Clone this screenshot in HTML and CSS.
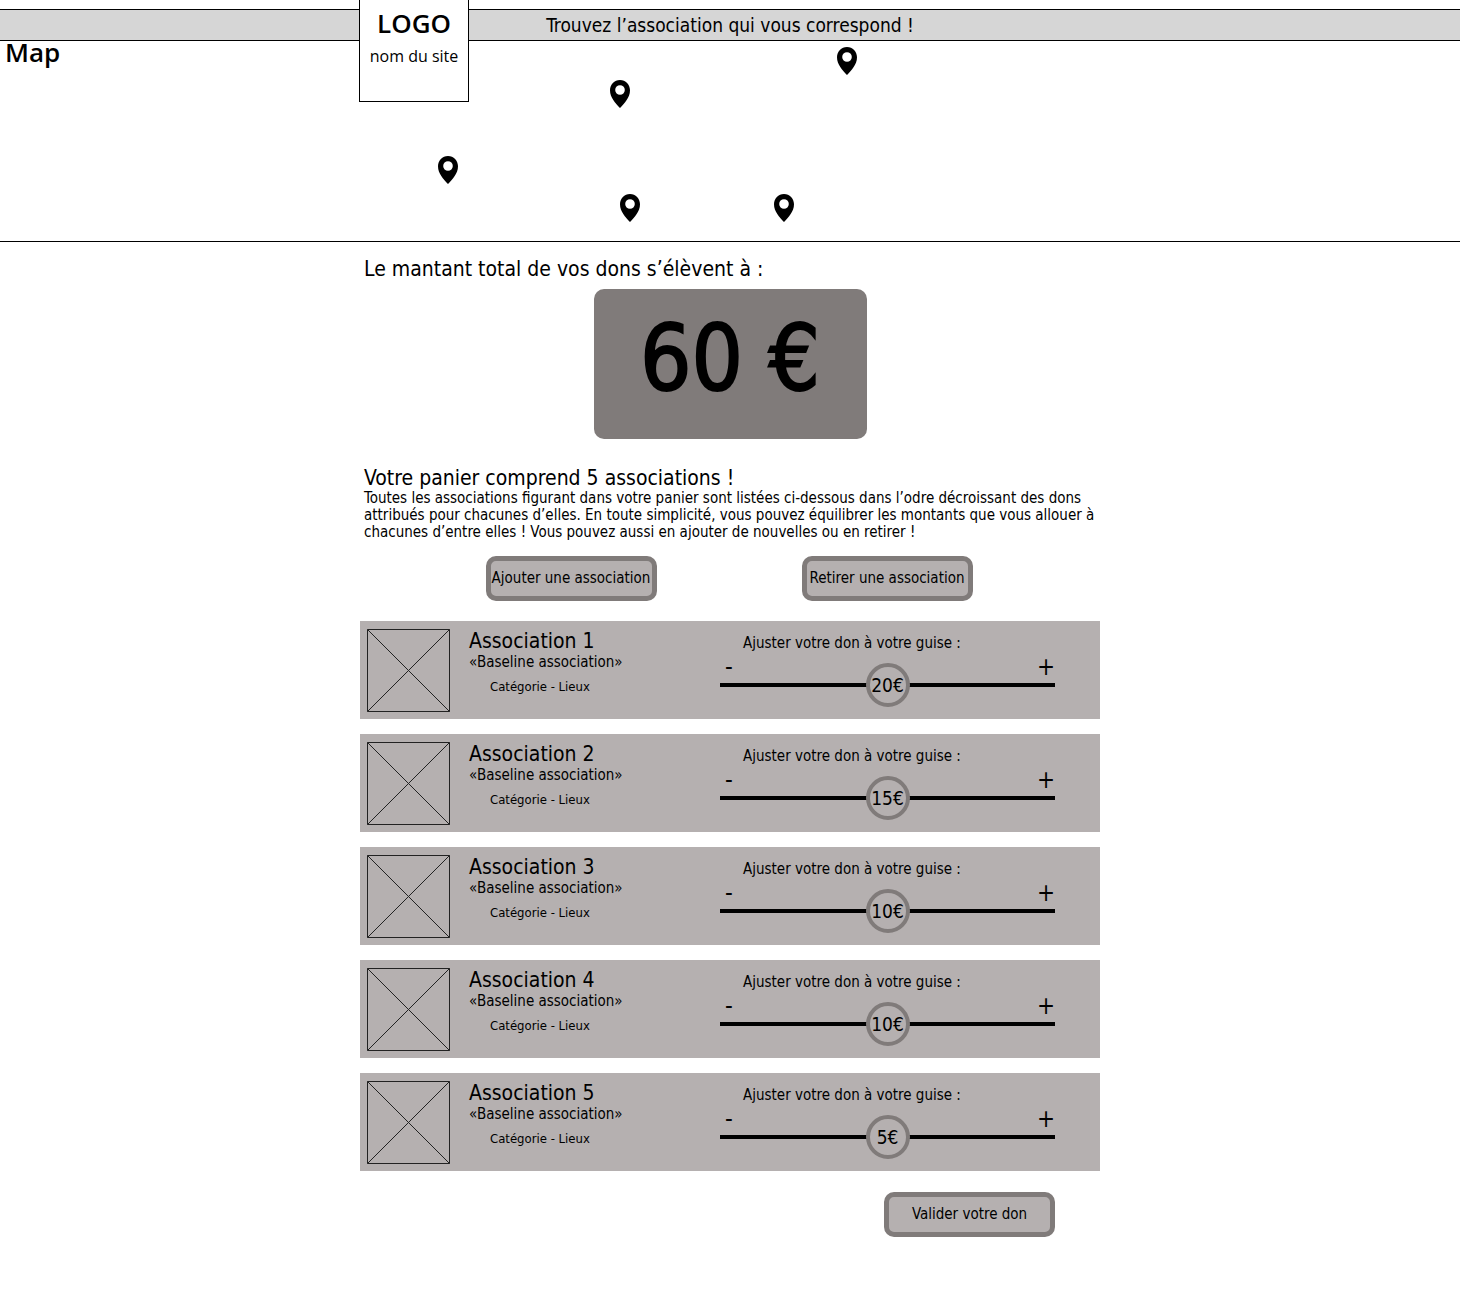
FILE: index.html
```html
<!DOCTYPE html>
<html lang="fr">
<head>
<meta charset="utf-8">
<meta name="viewport" content="width=device-width, initial-scale=1">
<title>Votre panier de dons</title>
<link rel="stylesheet" href="styles.css">
</head>
<body>
<svg class="sprite" aria-hidden="true">
  <symbol id="pin" viewBox="0 0 20 28">
    <path fill-rule="evenodd" d="M10 0C4.300 0 0 4.500 0 10.300C0 17.500 5.500 23.500 10 28C14.500 23.500 20 17.500 20 10.300C20 4.500 15.700 0 10 0ZM10 5.200a4.800 4.800 0 1 1 0 9.600a4.800 4.800 0 1 1 0-9.600Z"/>
  </symbol>
  <symbol id="placeholder" viewBox="0 0 83 83">
    <path d="M.5 .5H82.500V82.500H.5ZM.5 .5L82.500 82.500M82.500 .5L.5 82.500" fill="none" stroke="#222"/>
  </symbol>
</svg>

<header class="banner">
  <div class="banner-inner">
    <a class="logo" href="#"><span class="logo-mark">LOGO</span><span class="logo-name">nom du site</span></a>
    <p class="slogan">Trouvez l’association qui vous correspond !</p>
  </div>
</header>

<section class="map" aria-labelledby="map-title">
  <h2 class="map-title" id="map-title">Map</h2>
  <svg class="pin pin-a"><use href="#pin"/></svg>
  <svg class="pin pin-b"><use href="#pin"/></svg>
  <svg class="pin pin-c"><use href="#pin"/></svg>
  <svg class="pin pin-d"><use href="#pin"/></svg>
  <svg class="pin pin-e"><use href="#pin"/></svg>
</section>

<main class="basket">
  <h1 class="heading">Le mantant total de vos dons s’élèvent à :</h1>
  <p class="total">60 €</p>

  <h2 class="heading">Votre panier comprend 5 associations !</h2>
  <p class="intro">Toutes les associations figurant dans votre panier sont listées ci-dessous dans l’odre décroissant des dons attribués pour chacunes d’elles. En toute simplicité, vous pouvez équilibrer les montants que vous allouer à chacunes d’entre elles ! Vous pouvez aussi en ajouter de nouvelles ou en retirer !</p>

  <div class="actions">
    <button class="button" type="button">Ajouter une association</button>
    <button class="button" type="button">Retirer une association</button>
  </div>

  <ul class="cards">
    <li class="card">
      <svg class="thumb"><use href="#placeholder"/></svg>
      <div class="info"><h3 class="name">Association 1</h3><p class="baseline">«Baseline association»</p><p class="category">Catégorie - Lieux</p></div>
      <div class="adjust">
        <label class="adjust-label" for="don1">Ajuster votre don à votre guise :</label>
        <div class="steps"><button class="step" type="button">-</button><button class="step" type="button">+</button></div>
        <div class="slider"><input class="range" id="don1" type="range" min="0" max="40" value="20"><output class="amount" for="don1">20€</output></div>
      </div>
    </li>
    <li class="card">
      <svg class="thumb"><use href="#placeholder"/></svg>
      <div class="info"><h3 class="name">Association 2</h3><p class="baseline">«Baseline association»</p><p class="category">Catégorie - Lieux</p></div>
      <div class="adjust">
        <label class="adjust-label" for="don2">Ajuster votre don à votre guise :</label>
        <div class="steps"><button class="step" type="button">-</button><button class="step" type="button">+</button></div>
        <div class="slider"><input class="range" id="don2" type="range" min="0" max="30" value="15"><output class="amount" for="don2">15€</output></div>
      </div>
    </li>
    <li class="card">
      <svg class="thumb"><use href="#placeholder"/></svg>
      <div class="info"><h3 class="name">Association 3</h3><p class="baseline">«Baseline association»</p><p class="category">Catégorie - Lieux</p></div>
      <div class="adjust">
        <label class="adjust-label" for="don3">Ajuster votre don à votre guise :</label>
        <div class="steps"><button class="step" type="button">-</button><button class="step" type="button">+</button></div>
        <div class="slider"><input class="range" id="don3" type="range" min="0" max="20" value="10"><output class="amount" for="don3">10€</output></div>
      </div>
    </li>
    <li class="card">
      <svg class="thumb"><use href="#placeholder"/></svg>
      <div class="info"><h3 class="name">Association 4</h3><p class="baseline">«Baseline association»</p><p class="category">Catégorie - Lieux</p></div>
      <div class="adjust">
        <label class="adjust-label" for="don4">Ajuster votre don à votre guise :</label>
        <div class="steps"><button class="step" type="button">-</button><button class="step" type="button">+</button></div>
        <div class="slider"><input class="range" id="don4" type="range" min="0" max="20" value="10"><output class="amount" for="don4">10€</output></div>
      </div>
    </li>
    <li class="card">
      <svg class="thumb"><use href="#placeholder"/></svg>
      <div class="info"><h3 class="name">Association 5</h3><p class="baseline">«Baseline association»</p><p class="category">Catégorie - Lieux</p></div>
      <div class="adjust">
        <label class="adjust-label" for="don5">Ajuster votre don à votre guise :</label>
        <div class="steps"><button class="step" type="button">-</button><button class="step" type="button">+</button></div>
        <div class="slider"><input class="range" id="don5" type="range" min="0" max="10" value="5"><output class="amount" for="don5">5€</output></div>
      </div>
    </li>
  </ul>

  <div class="submit"><button class="button" type="submit">Valider votre don</button></div>
</main>
</body>
</html>
```
FILE: styles.css
```css
* { box-sizing: border-box; }

body {
  margin: 0;
  padding-top: 9px;
  background: #fff;
  color: #000;
  font-family: "DejaVu Sans Condensed", "DejaVu Sans", sans-serif;
  font-stretch: condensed;
  font-size: 15px;
  line-height: 17px;
}

h1, h2, h3, p, ul { margin: 0; padding: 0; font-weight: 400; }

button, input { font: inherit; color: inherit; }

.sprite { position: absolute; width: 0; height: 0; }

/* Banner */
.banner {
  background: #d6d6d6;
  border-top: 1px solid #000;
  border-bottom: 1px solid #000;
}

.banner-inner {
  position: relative;
  max-width: 742px;
  margin: 0 auto;
}

.slogan {
  font-size: 19px;
  line-height: 30px;
  text-align: center;
}

.logo {
  position: absolute;
  z-index: 1;
  left: 0;
  top: -10px;
  display: flex;
  flex-direction: column;
  align-items: center;
  width: 110px;
  height: 102px;
  padding-top: 8px;
  background: #fff;
  border: 1px solid #000;
  border-top: 0;
  color: inherit;
  text-decoration: none;
  font-family: "Open Sans", sans-serif;
  font-stretch: normal;
}

.logo-mark { font-size: 26px; line-height: 30px; font-weight: 600; }
.logo-name { font-size: 16px; line-height: 36px; font-weight: 500; }

/* Map */
.map {
  position: relative;
  height: 201px;
  padding-left: 5px;
  border-bottom: 1px solid #000;
}

.map-title {
  font-family: "Open Sans", sans-serif;
  font-stretch: normal;
  font-size: 26px;
  line-height: 22px;
  font-weight: 600;
}

.pin { position: absolute; width: 20px; height: 28px; }
.pin-a { left: calc(50% - 292px); top: 115px; }
.pin-b { left: calc(50% - 120px); top: 39px; }
.pin-c { left: calc(50% + 107px); top: 6px; }
.pin-d { left: calc(50% - 110px); top: 153px; }
.pin-e { left: calc(50% + 44px); top: 153px; }

/* Basket */
.basket {
  max-width: 740px;
  margin: 0 auto;
  padding: 15px 0 64px;
}

.heading {
  padding-left: 4px;
  font-size: 21px;
  line-height: 24px;
}

.total {
  width: 273px;
  height: 150px;
  margin: 8px auto 27px;
  border-radius: 10px;
  background: #807b7a;
  font-size: 90px;
  line-height: 140px;
  text-align: center;
  -webkit-text-stroke: 2px #000;
}

.intro { padding: 0 4px; }

.actions {
  display: flex;
  justify-content: center;
  gap: 145px;
  margin: 15px 0 20px;
  padding-right: 2px;
}

.button {
  width: 171px;
  height: 45px;
  padding: 0;
  border: 5px solid #807b7a;
  border-radius: 10px;
  background: #b5b0b0;
  white-space: nowrap;
}

.cards {
  display: flex;
  flex-direction: column;
  gap: 15px;
  list-style: none;
}

.card {
  display: flex;
  padding: 8px 45px 7px 7px;
  background: #b5b0b0;
}

.thumb { flex: none; width: 83px; height: 83px; }

.info { flex: 1; padding-left: 19px; }
.name { font-size: 21px; line-height: 25px; }
.category { padding: 7px 0 0 21px; font-size: 13px; }

.adjust { width: 335px; padding-top: 6px; }
.adjust-label { display: block; padding-left: 23px; }
.steps { display: flex; justify-content: space-between; }

.step {
  height: 30px;
  padding: 0 0 0 5px;
  border: 0;
  background: none;
  font-size: 24px;
  line-height: 30px;
}

.slider { position: relative; height: 44px; margin-top: -19px; }

.range {
  display: block;
  width: 100%;
  height: 44px;
  margin: 0;
  appearance: none;
  background: linear-gradient(#000, #000) center / 100% 4px no-repeat;
}

.range::-webkit-slider-thumb {
  appearance: none;
  width: 44px;
  height: 44px;
  border: 4px solid #807b7a;
  border-radius: 50%;
  background: #b5b0b0;
}

.amount {
  position: absolute;
  inset: 0;
  font-size: 19px;
  line-height: 44px;
  text-align: center;
  pointer-events: none;
}

.submit {
  display: flex;
  justify-content: flex-end;
  padding: 21px 45px 0 0;
}
```
